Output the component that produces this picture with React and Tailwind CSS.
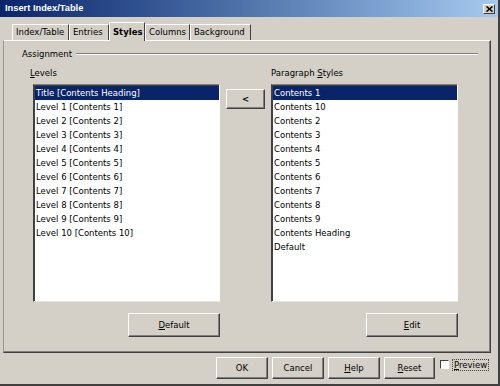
const FONT = { fontFamily: '"DejaVu Sans", sans-serif' };

const levels = [
  "Title [Contents Heading]",
  "Level 1 [Contents 1]",
  "Level 2 [Contents 2]",
  "Level 3 [Contents 3]",
  "Level 4 [Contents 4]",
  "Level 5 [Contents 5]",
  "Level 6 [Contents 6]",
  "Level 7 [Contents 7]",
  "Level 8 [Contents 8]",
  "Level 9 [Contents 9]",
  "Level 10 [Contents 10]",
];

const styles = [
  "Contents 1",
  "Contents 10",
  "Contents 2",
  "Contents 3",
  "Contents 4",
  "Contents 5",
  "Contents 6",
  "Contents 7",
  "Contents 8",
  "Contents 9",
  "Contents Heading",
  "Default",
];

const raised =
  "bg-[#d4d0c8] border border-t-white border-l-white border-r-[#404040] border-b-[#404040] shadow-[inset_-1px_-1px_0_#808080]";

function Button({ className = "", children }) {
  return (
    <div className={`${raised} flex items-center justify-center text-[8.5px] text-black ${className}`}>
      {children}
    </div>
  );
}

function ListBox({ items }) {
  return (
    <div className="w-[187px] h-[218px] bg-white border border-t-[#808080] border-l-[#404040] border-r-white border-b-[#e8e6e0] shadow-[inset_1px_1px_0_#404040]">
      <div className="pt-px pl-px">
        {items.map((item, i) => (
          <div
            key={item}
            className={`h-[14px] leading-[14px] pl-[1px] text-[8.5px] whitespace-nowrap ${
              i === 0 ? "bg-[#0a246a] text-white" : "text-black"
            }`}
          >
            {item}
          </div>
        ))}
      </div>
    </div>
  );
}

function Tab({ label, active, className = "" }) {
  if (active) {
    return (
      <div
        className={`h-[19px] -mb-px z-10 px-[3px] bg-[#d4d0c8] border border-b-0 border-t-white border-l-white border-r-[#404040] flex items-center font-bold text-[8.5px] ${className}`}
      >
        {label}
      </div>
    );
  }
  return (
    <div
      className={`h-[16px] px-[3px] border border-b-0 border-t-white border-l-white border-r-[#404040] flex items-center text-[8.5px] ${className}`}
    >
      {label}
    </div>
  );
}

export default function App() {
  return (
    <div
      style={FONT}
      className="w-[500px] h-[386px] bg-[#d4d0c8] border-r-2 border-b-2 border-r-[#404040] border-b-[#404040] overflow-hidden text-black"
    >
      {/* TITLE BAR */}
      <div className="h-[17px] bg-gradient-to-r from-[#0a246a] to-[#a6caf0] flex items-center justify-between pl-[5px] pr-[3px]">
        <span
          className="text-white font-bold text-[9.3px] leading-none"
          style={{ fontFamily: '"Liberation Sans", sans-serif' }}
        >
          Insert Index/Table
        </span>
        <div className="w-[12px] h-[10px] bg-[#d4d0c8] border border-t-white border-l-white border-r-[#404040] border-b-[#404040] flex items-center justify-center">
          <svg width="7" height="6" viewBox="0 0 7 6">
            <path d="M0.5 0.5 L6.5 5.5 M6.5 0.5 L0.5 5.5" stroke="#000" strokeWidth="1.6" />
          </svg>
        </div>
      </div>

      {/* TABS */}
      <div className="h-[23px] flex items-end pl-[12px]">
        <Tab label="Index/Table" className="w-[57px]" />
        <Tab label="Entries" className="w-[40px]" />
        <Tab label="Styles" active className="w-[36px]" />
        <Tab label="Columns" className="w-[45px]" />
        <Tab label="Background" className="w-[61px]" />
      </div>

      {/* PANEL */}
      <div className="ml-[3px] w-[488px] h-[313px] border border-t-white border-l-[#9a978f] border-r-[#404040] border-b-[#404040] shadow-[inset_-1px_-1px_0_#808080]">
        {/* ASSIGNMENT */}
        <div className="flex items-center ml-[18px] mr-[12px] mt-[7px] h-[12px]">
          <span className="text-[8.5px] leading-[12px]">Assignment</span>
          <div className="flex-1 ml-[4px] h-[2px] border-t border-t-[#808080] border-b border-b-white" />
        </div>

        <div className="flex mt-[7px]">
          {/* LEFT */}
          <div className="ml-[26px] w-[190px] flex flex-col">
            <div className="h-[12px] leading-[12px] text-[8.5px]">
              <span className="underline">L</span>evels
            </div>
            <div className="ml-[3px] mt-[5px]">
              <ListBox items={levels} />
            </div>
            <div className="flex justify-end mt-[11px]">
              <Button className="w-[92px] h-[24px]">
                <span>
                  <span className="underline">D</span>efault
                </span>
              </Button>
            </div>
          </div>

          {/* MIDDLE */}
          <div className="ml-[6px] mt-[22px]">
            <Button className="w-[39px] h-[20px] font-bold">&lt;</Button>
          </div>

          {/* RIGHT */}
          <div className="ml-[6px] w-[187px] flex flex-col">
            <div className="h-[12px] leading-[12px] text-[8.5px]">
              Paragraph <span className="underline">S</span>tyles
            </div>
            <div className="mt-[5px]">
              <ListBox items={styles} />
            </div>
            <div className="flex justify-end mt-[11px]">
              <Button className="w-[92px] h-[24px]">
                <span>
                  <span className="underline">E</span>dit
                </span>
              </Button>
            </div>
          </div>
        </div>
      </div>

      {/* FOOTER */}
      <div className="flex items-start pl-[216px] mt-[4px] gap-[4px]">
        <Button className="w-[52px] h-[22px]">OK</Button>
        <Button className="w-[52px] h-[22px]">Cancel</Button>
        <Button className="w-[52px] h-[22px]">
          <span>
            <span className="underline">H</span>elp
          </span>
        </Button>
        <Button className="w-[51px] h-[22px]">
          <span>
            <span className="underline">R</span>eset
          </span>
        </Button>
        <div className="ml-[1px] mt-[3px] w-[9px] h-[9px] bg-white border border-t-[#404040] border-l-[#404040] border-r-white border-b-white" />
        <div className="ml-[-1px] mt-[2px] h-[12px] px-[1px] border border-dotted border-[#404040] text-[8.5px] leading-[10px]">
          <span className="underline">P</span>review
        </div>
      </div>
    </div>
  );
}
